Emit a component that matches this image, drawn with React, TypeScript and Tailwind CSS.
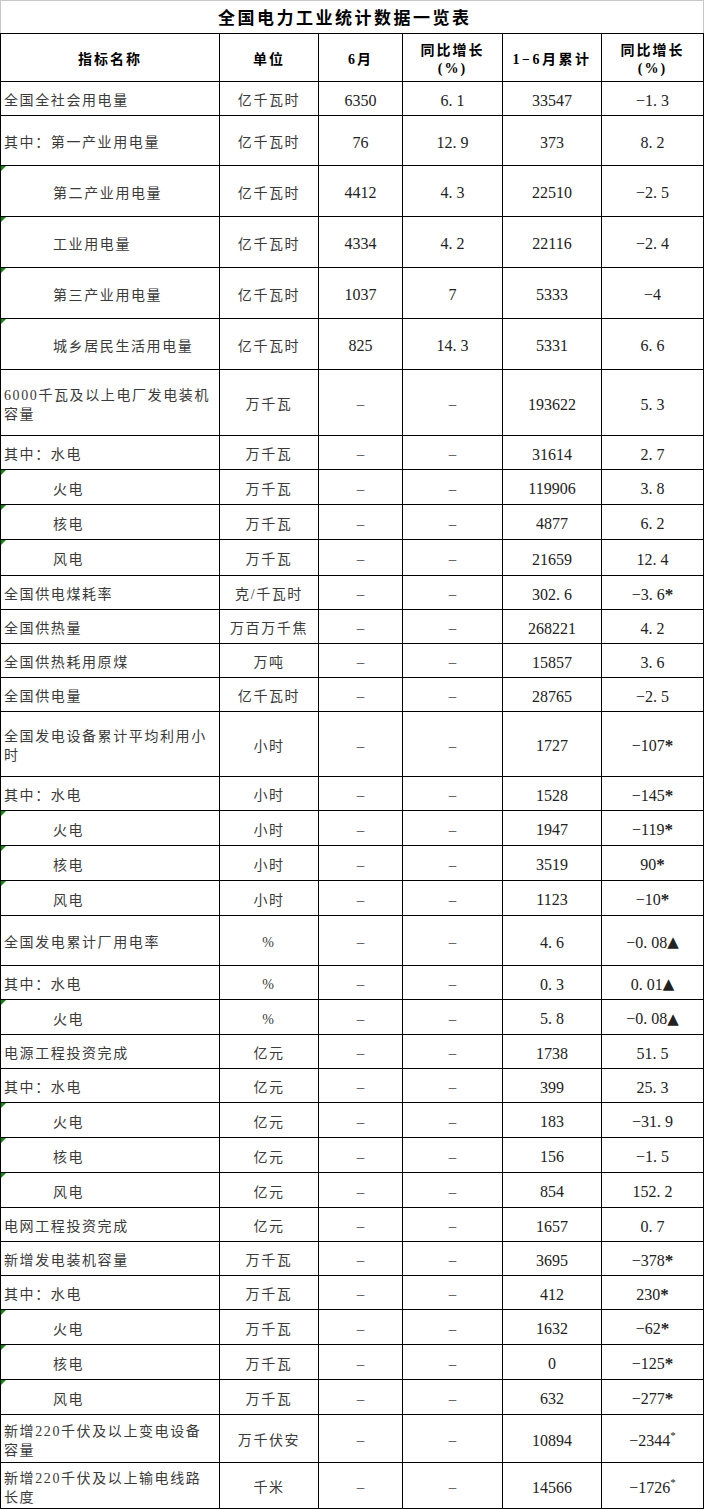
import React from 'react';

type Row = {
  label: string[];
  indent?: boolean;
  unit: string;
  m?: string;
  my?: string;
  c: string;
  cy: string;
  mark?: 'star' | 'tri' | 'sup';
  h: string;
};

const rows: Row[] = [
  { label: ['全国全社会用电量'], unit: '亿千瓦时', m: '6350', my: '6.1', c: '33547', cy: '-1.3', h: 'h-[34px]' },
  { label: ['其中：第一产业用电量'], unit: '亿千瓦时', m: '76', my: '12.9', c: '373', cy: '8.2', h: 'h-[50px]' },
  { label: ['第二产业用电量'], indent: true, unit: '亿千瓦时', m: '4412', my: '4.3', c: '22510', cy: '-2.5', h: 'h-[51px]' },
  { label: ['工业用电量'], indent: true, unit: '亿千瓦时', m: '4334', my: '4.2', c: '22116', cy: '-2.4', h: 'h-[51px]' },
  { label: ['第三产业用电量'], indent: true, unit: '亿千瓦时', m: '1037', my: '7', c: '5333', cy: '-4', h: 'h-[51px]' },
  { label: ['城乡居民生活用电量'], indent: true, unit: '亿千瓦时', m: '825', my: '14.3', c: '5331', cy: '6.6', h: 'h-[51px]' },
  { label: ['6000千瓦及以上电厂发电装机', '容量'], unit: '万千瓦', c: '193622', cy: '5.3', h: 'h-[66px]' },
  { label: ['其中：水电'], unit: '万千瓦', c: '31614', cy: '2.7', h: 'h-[34px]' },
  { label: ['火电'], indent: true, unit: '万千瓦', c: '119906', cy: '3.8', h: 'h-[35px]' },
  { label: ['核电'], indent: true, unit: '万千瓦', c: '4877', cy: '6.2', h: 'h-[35px]' },
  { label: ['风电'], indent: true, unit: '万千瓦', c: '21659', cy: '12.4', h: 'h-[36px]' },
  { label: ['全国供电煤耗率'], unit: '克/千瓦时', c: '302.6', cy: '-3.6', mark: 'star', h: 'h-[34px]' },
  { label: ['全国供热量'], unit: '万百万千焦', c: '268221', cy: '4.2', h: 'h-[34px]' },
  { label: ['全国供热耗用原煤'], unit: '万吨', c: '15857', cy: '3.6', h: 'h-[34px]' },
  { label: ['全国供电量'], unit: '亿千瓦时', c: '28765', cy: '-2.5', h: 'h-[34px]' },
  { label: ['全国发电设备累计平均利用小', '时'], unit: '小时', c: '1727', cy: '-107', mark: 'star', h: 'h-[65px]' },
  { label: ['其中：水电'], unit: '小时', c: '1528', cy: '-145', mark: 'star', h: 'h-[34px]' },
  { label: ['火电'], indent: true, unit: '小时', c: '1947', cy: '-119', mark: 'star', h: 'h-[35px]' },
  { label: ['核电'], indent: true, unit: '小时', c: '3519', cy: '90', mark: 'star', h: 'h-[35px]' },
  { label: ['风电'], indent: true, unit: '小时', c: '1123', cy: '-10', mark: 'star', h: 'h-[35px]' },
  { label: ['全国发电累计厂用电率'], unit: '%', c: '4.6', cy: '-0.08', mark: 'tri', h: 'h-[50px]' },
  { label: ['其中：水电'], unit: '%', c: '0.3', cy: '0.01', mark: 'tri', h: 'h-[34px]' },
  { label: ['火电'], indent: true, unit: '%', c: '5.8', cy: '-0.08', mark: 'tri', h: 'h-[35px]' },
  { label: ['电源工程投资完成'], unit: '亿元', c: '1738', cy: '51.5', h: 'h-[34px]' },
  { label: ['其中：水电'], unit: '亿元', c: '399', cy: '25.3', h: 'h-[34px]' },
  { label: ['火电'], indent: true, unit: '亿元', c: '183', cy: '-31.9', h: 'h-[35px]' },
  { label: ['核电'], indent: true, unit: '亿元', c: '156', cy: '-1.5', h: 'h-[35px]' },
  { label: ['风电'], indent: true, unit: '亿元', c: '854', cy: '152.2', h: 'h-[35px]' },
  { label: ['电网工程投资完成'], unit: '亿元', c: '1657', cy: '0.7', h: 'h-[34px]' },
  { label: ['新增发电装机容量'], unit: '万千瓦', c: '3695', cy: '-378', mark: 'star', h: 'h-[34px]' },
  { label: ['其中：水电'], unit: '万千瓦', c: '412', cy: '230', mark: 'star', h: 'h-[34px]' },
  { label: ['火电'], indent: true, unit: '万千瓦', c: '1632', cy: '-62', mark: 'star', h: 'h-[35px]' },
  { label: ['核电'], indent: true, unit: '万千瓦', c: '0', cy: '-125', mark: 'star', h: 'h-[35px]' },
  { label: ['风电'], indent: true, unit: '万千瓦', c: '632', cy: '-277', mark: 'star', h: 'h-[35px]' },
  { label: ['新增220千伏及以上变电设备', '容量'], unit: '万千伏安', c: '10894', cy: '-2344', mark: 'sup', h: 'h-[48px]' },
  { label: ['新增220千伏及以上输电线路', '长度'], unit: '千米', c: '14566', cy: '-1726', mark: 'sup', h: 'h-[46px]' },
];

const FONT = "font-['Liberation_Serif','Noto_Sans_CJK_SC',serif]";
const cellBase = 'border-r border-b border-black flex items-center pt-[4px]';

function Num({ v }: { v: string }) {
  const text = v.replace(/^-/, '−').replace('.', '. ');
  return <span className="text-[16px] text-[#222] whitespace-pre">{text}</span>;
}

function Dash() {
  return <span className="text-[15px] text-[#444]">–</span>;
}

function Mark({ m }: { m?: Row['mark'] }) {
  if (m === 'star') return <span className="text-[17px] align-[-4px] font-bold">*</span>;
  if (m === 'tri') return <span className="text-[15px] font-['DejaVu_Sans',sans-serif]">▲</span>;
  if (m === 'sup') return <sup className="text-[11px] top-[-6px]">*</sup>;
  return null;
}

export default function App() {
  return (
    <div className={`w-[704px] bg-white ${FONT}`}>
      <div className="h-[33px] border-t border-x border-[#c8c8c8] flex items-center pl-[217px] pt-[4px]">
        <span className="text-[17px] font-bold tracking-[2.5px] text-black">全国电力工业统计数据一览表</span>
      </div>
      <div className="border-l border-t border-black">
        <div className="grid grid-cols-[219px_99px_84px_100px_99px_102px] h-[48px] text-[14px] font-bold text-black tracking-[2px]">
          <div className={`${cellBase} justify-center`}>指标名称</div>
          <div className={`${cellBase} justify-center`}>单位</div>
          <div className={`${cellBase} justify-center`}>6月</div>
          <div className={`${cellBase} justify-center flex-col leading-[18px] text-center`}>
            <span>同比增长</span>
            <span>(%)</span>
          </div>
          <div className={`${cellBase} justify-center tracking-[2.5px]`}>1−6月累计</div>
          <div className={`${cellBase} justify-center flex-col leading-[18px] text-center`}>
            <span>同比增长</span>
            <span>(%)</span>
          </div>
        </div>
        {rows.map((r, i) => (
          <div key={i} className={`grid grid-cols-[219px_99px_84px_100px_99px_102px] ${r.h}`}>
            <div className={`${cellBase} relative ${r.indent ? 'pl-[52px]' : 'pl-[3px]'}`}>
              {r.indent && (
                <span className="absolute left-0 top-0 w-0 h-0 border-t-[5px] border-t-[#0a8a0a] border-r-[5px] border-r-transparent" />
              )}
              <div className="text-[14px] leading-[19px] tracking-[1.6px] text-[#3a3a3a] whitespace-nowrap">
                {r.label.map((l, j) => (
                  <div key={j}>{l}</div>
                ))}
              </div>
            </div>
            <div className={`${cellBase} justify-center`}>
              <span className="text-[14px] tracking-[1.6px] text-[#3a3a3a] whitespace-nowrap">{r.unit}</span>
            </div>
            <div className={`${cellBase} justify-center`}>{r.m ? <Num v={r.m} /> : <Dash />}</div>
            <div className={`${cellBase} justify-center`}>{r.my ? <Num v={r.my} /> : <Dash />}</div>
            <div className={`${cellBase} justify-center`}>
              <Num v={r.c} />
            </div>
            <div className={`${cellBase} justify-center text-[#222]`}>
              <Num v={r.cy} />
              <Mark m={r.mark} />
            </div>
          </div>
        ))}
      </div>
    </div>
  );
}
